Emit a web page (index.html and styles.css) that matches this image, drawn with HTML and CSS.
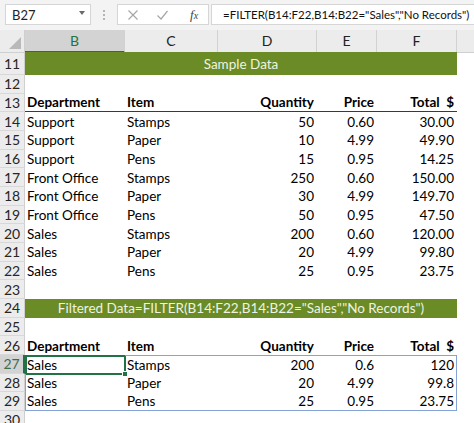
FILE: index.html
```html
<!DOCTYPE html>
<html>
<head>
<meta charset="utf-8">
<link rel="stylesheet" href="styles.css">
</head>
<body>
<div class="app">
  <div class="fbar">
    <div class="namebox"><span class="nb-text">B27</span><span class="nb-arrow"></span></div>
    <div class="dots"><span></span><span></span><span></span></div>
    <div class="btns">
      <svg class="ico" width="12" height="12" viewBox="0 0 12 12"><path d="M1.5 1.5 L10.5 10.5 M10.5 1.5 L1.5 10.5" stroke="#a6a6a6" stroke-width="1.2" fill="none"/></svg>
      <svg class="ico" width="13" height="12" viewBox="0 0 13 12"><path d="M1.5 6.5 L5 10 L11.5 2" stroke="#a6a6a6" stroke-width="1.2" fill="none"/></svg>
      <span class="fx">f<span class="fx-x">x</span></span>
    </div>
    <div class="formula">=FILTER(B14:F22,B14:B22="Sales","No Records")</div>
  </div>

  <div class="sheet">
    <div class="r hdr">
      <div class="corner"><span class="tri"></span></div>
      <div class="ch sel">B</div>
      <div class="ch">C</div>
      <div class="ch">D</div>
      <div class="ch">E</div>
      <div class="ch">F</div>
      <div class="ch last"></div>
    </div>

    <div class="r r11">
      <div class="rh">11</div>
      <div class="band">Sample Data</div>
    </div>
    <div class="r"><div class="rh">12</div></div>
    <div class="r bold">
      <div class="rh">13</div>
      <div class="c ul">Department</div>
      <div class="c ul">Item</div>
      <div class="c ul n">Quantity</div>
      <div class="c ul n">Price</div>
      <div class="c ul n">Total&nbsp;&nbsp;$</div>
    </div>
    <div class="r"><div class="rh">14</div><div class="c">Support</div><div class="c">Stamps</div><div class="c n">50</div><div class="c n">0.60</div><div class="c n">30.00</div></div>
    <div class="r"><div class="rh">15</div><div class="c">Support</div><div class="c">Paper</div><div class="c n">10</div><div class="c n">4.99</div><div class="c n">49.90</div></div>
    <div class="r"><div class="rh">16</div><div class="c">Support</div><div class="c">Pens</div><div class="c n">15</div><div class="c n">0.95</div><div class="c n">14.25</div></div>
    <div class="r"><div class="rh">17</div><div class="c">Front Office</div><div class="c">Stamps</div><div class="c n">250</div><div class="c n">0.60</div><div class="c n">150.00</div></div>
    <div class="r"><div class="rh">18</div><div class="c">Front Office</div><div class="c">Paper</div><div class="c n">30</div><div class="c n">4.99</div><div class="c n">149.70</div></div>
    <div class="r"><div class="rh">19</div><div class="c">Front Office</div><div class="c">Pens</div><div class="c n">50</div><div class="c n">0.95</div><div class="c n">47.50</div></div>
    <div class="r"><div class="rh">20</div><div class="c">Sales</div><div class="c">Stamps</div><div class="c n">200</div><div class="c n">0.60</div><div class="c n">120.00</div></div>
    <div class="r"><div class="rh">21</div><div class="c">Sales</div><div class="c">Paper</div><div class="c n">20</div><div class="c n">4.99</div><div class="c n">99.80</div></div>
    <div class="r"><div class="rh">22</div><div class="c">Sales</div><div class="c">Pens</div><div class="c n">25</div><div class="c n">0.95</div><div class="c n">23.75</div></div>
    <div class="r"><div class="rh">23</div></div>
    <div class="r">
      <div class="rh">24</div>
      <div class="band">Filtered Data=FILTER(B14:F22,B14:B22="Sales","No Records")</div>
    </div>
    <div class="r"><div class="rh">25</div></div>
    <div class="r bold">
      <div class="rh">26</div>
      <div class="c">Department</div>
      <div class="c">Item</div>
      <div class="c n">Quantity</div>
      <div class="c n">Price</div>
      <div class="c n">Total&nbsp;&nbsp;$</div>
    </div>
    <div class="r sp-top">
      <div class="rh rsel">27</div>
      <div class="c sp-l active">Sales<span class="selbox"><span class="handle"></span></span></div>
      <div class="c">Stamps</div><div class="c n">200</div><div class="c n">0.6</div><div class="c n sp-r">120</div>
    </div>
    <div class="r">
      <div class="rh">28</div>
      <div class="c sp-l">Sales</div><div class="c">Paper</div><div class="c n">20</div><div class="c n">4.99</div><div class="c n sp-r">99.8</div>
    </div>
    <div class="r sp-bot">
      <div class="rh">29</div>
      <div class="c sp-l">Sales</div><div class="c">Pens</div><div class="c n">25</div><div class="c n">0.95</div><div class="c n sp-r">23.75</div>
    </div>
    <div class="r"><div class="rh">30</div></div>
  </div>
</div>
</body>
</html>
```

FILE: styles.css
```css
* { box-sizing: border-box; }
html, body { margin: 0; padding: 0; background: #ffffff; }
body {
  width: 474px;
  height: 423px;
  overflow: hidden;
  font-family: "Lato", "Liberation Sans", sans-serif;
  color: #000;
}

.fbar {
  height: 30px;
  background: #f3f3f3;
  display: flex;
  align-items: flex-start;
  padding-top: 4px;
}
.namebox {
  margin-left: 5px;
  width: 86px;
  height: 21px;
  background: #fff;
  border: 1px solid #d6d6d6;
  display: flex;
  align-items: center;
  justify-content: space-between;
  padding: 0 5px 0 6px;
  font-size: 13px;
  color: #222;
}
.nb-arrow {
  width: 0; height: 0;
  border-left: 3.5px solid transparent;
  border-right: 3.5px solid transparent;
  border-top: 4px solid #6a6a6a;
  margin-top: -3px;
}
.dots {
  width: 26px;
  height: 21px;
  display: flex;
  flex-direction: column;
  align-items: center;
  justify-content: center;
  gap: 2px;
}
.dots span { width: 2px; height: 2px; background: #b5b5b5; }
.btns {
  width: 92px;
  height: 21px;
  background: #fff;
  border: 1px solid #d6d6d6;
  display: flex;
  align-items: center;
  padding-left: 9px;
  gap: 17px;
}
.fx {
  font-family: "Liberation Serif", serif;
  font-style: italic;
  font-size: 13px;
  color: #444;
  margin-left: 4px;
}
.fx-x { font-size: 10px; }
.formula {
  margin-left: 2px;
  flex: 1;
  height: 21px;
  background: #fff;
  border: 1px solid #d6d6d6;
  border-right: none;
  font-size: 11.5px;
  line-height: 19px;
  padding-left: 11px;
  white-space: nowrap;
  overflow: hidden;
  color: #111;
}

.sheet { display: flex; flex-direction: column; }
.r {
  display: grid;
  grid-template-columns: 25px 100px 93px 99px 60px 80px 1fr;
  height: 18.667px;
  font-size: 13.5px;
}
.r.hdr { height: 22px; background: #ececec; }
.r.r11 { height: 23px; }
.corner {
  position: relative;
  border-right: 1px solid #cfcfcf;
  border-bottom: 1px solid #cfcfcf;
}
.tri {
  position: absolute;
  right: 3px; bottom: 3px;
  width: 0; height: 0;
  border-left: 12px solid transparent;
  border-bottom: 12px solid #b9b9b9;
}
.ch {
  text-align: center;
  line-height: 21px;
  font-size: 14px;
  color: #222;
  border-right: 1px solid #d2d2d2;
  border-bottom: 1px solid #cfcfcf;
}
.ch.sel {
  background: #d3d3d3;
  color: #217346;
  border-bottom: 2px solid #217346;
}
.ch.last { border-right: none; }

.rh {
  background: #ececec;
  border-right: 1px solid #cfcfcf;
  border-bottom: 1px solid #d8d8d8;
  text-align: center;
  color: #262626;
  display: flex;
  align-items: center;
  justify-content: center;
  font-size: 14px;
}
.rh.rsel {
  background: #d3d3d3;
  color: #3c6e4f;
  border-right: 2px solid #217346;
}

.band {
  grid-column: 2 / 7;
  background: #6a8b25;
  color: #eef3e4;
  text-align: center;
  display: flex;
  align-items: center;
  justify-content: center;
  white-space: nowrap;
  font-size: 13.5px;
}

.c {
  display: flex;
  align-items: center;
  padding: 0 3px 0 2px;
  white-space: nowrap;
  position: relative;
}
.c.n { justify-content: flex-end; }
.bold .c { font-weight: 700; }
.c.ul { border-bottom: 1px solid #3a3a3a; }

.sp-top .c { border-top: 1px solid #86a3d8; }
.sp-bot .c { border-bottom: 1px solid #86a3d8; }
.c.sp-l { border-left: 1px solid #86a3d8; padding-left: 1px; }
.c.sp-r { border-right: 1px solid #86a3d8; padding-right: 2px; }

.selbox {
  position: absolute;
  left: -1px; right: -1px; top: -1px; bottom: -1px;
  border: 2px solid #217346;
}
.handle {
  position: absolute;
  right: -4px; bottom: -4px;
  width: 6px; height: 6px;
  background: #217346;
  border: 1px solid #fff;
}
```
